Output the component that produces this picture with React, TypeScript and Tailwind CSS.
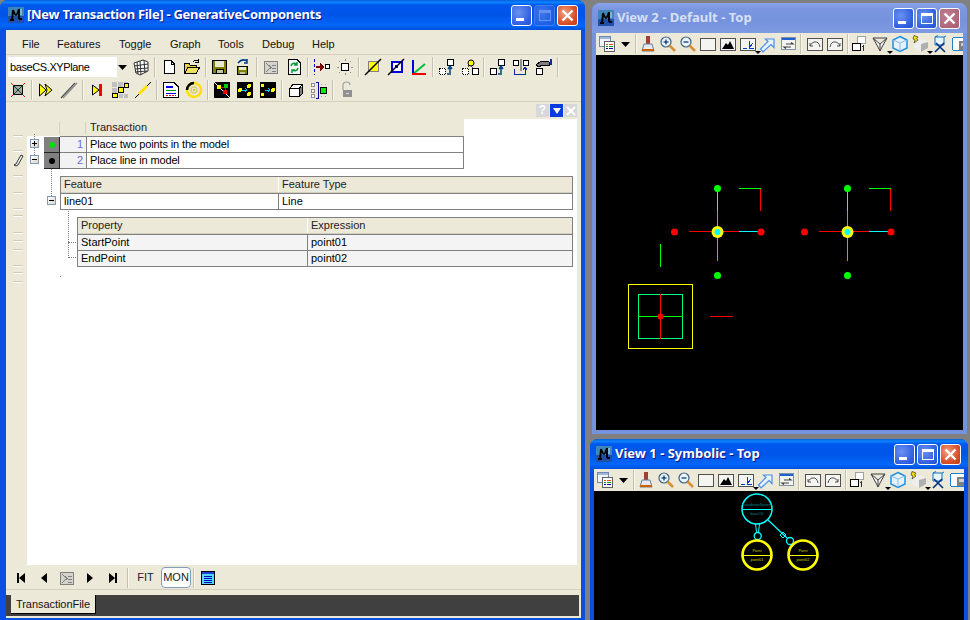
import React from 'react';

const Svg = ({ children, size = 18 }: { children: React.ReactNode; size?: number }) => (
  <svg width={size} height={size} viewBox="0 0 18 18" shapeRendering="crispEdges" className="block shrink-0">
    {children}
  </svg>
);

const Logo = () => (
  <svg width="16" height="16" viewBox="0 0 16 16" className="block shrink-0">
    <rect x="0" y="0" width="16" height="16" rx="1" fill="#3f86b8" />
    <rect x="0" y="9" width="16" height="7" fill="#1f4fa8" />
    <path d="M4 14 L5 3 M5 3 Q7 8 8 8 Q9 8 11 2 M11 2 L11 12 M11 12 L14 12 M2 13 L6 13" stroke="#000" strokeWidth="2" fill="none" />
    <path d="M13 2 L13 8" stroke="#bfe6ff" strokeWidth="1" />
  </svg>
);

// main window, toolbar row one
const GridIcon = () => <Svg><path d="M2 5 L11 2 L16 4 L16 13 L8 17 L4 15 Z M5 4 L6 16 M8 3 L9 17 M12 2 L13 15 M2 8 L16 6 M3 11 L16 10 M3 14 L15 13" fill="#fff" stroke="#333" strokeWidth="1" shapeRendering="auto" /></Svg>;
const NewDoc = () => <Svg><path d="M4.5 2.5 H11 L14.5 6 V15.5 H4.5 Z" fill="#fff" stroke="#000" /><path d="M11 2.5 V6 H14.5" fill="none" stroke="#000" /></Svg>;
const OpenFolder = () => <Svg><path d="M1.5 5.5 H6 L7 7 H13 V9 H5 L1.5 15.5 Z" fill="#e8d048" stroke="#000" /><path d="M1.5 15.5 L5 9 H17 L13 15.5 Z" fill="#f0e060" stroke="#000" /><path d="M10 4 Q12 1 15 3 M15 1 V4 H12" fill="none" stroke="#000" /></Svg>;
const Floppy = () => <Svg><rect x="1.5" y="2.5" width="14" height="13" fill="#808000" stroke="#000" /><rect x="4" y="3" width="9" height="6" fill="#e8e8d0" /><rect x="5" y="11" width="7" height="4" fill="#c8c8a0" stroke="#000" strokeWidth="1" /></Svg>;
const FloppyArrow = () => <Svg><rect x="3.5" y="8.5" width="10" height="8" fill="#808000" stroke="#000" /><rect x="5" y="9" width="7" height="3" fill="#e8e8d0" /><rect x="6" y="14" width="5" height="2" fill="#c8c8a0" /><path d="M4 5 Q8 0 13 3 M13 1 V5 H10" fill="none" stroke="#003c8c" strokeWidth="1.5" shapeRendering="auto" /></Svg>;
const ScriptGray = () => <Svg><rect x="2.5" y="3.5" width="13" height="12" fill="#d4d4cc" stroke="#808080" /><path d="M4 5 L9 9.5 L4 14 M10 7 H14 M10 10 H14 M10 13 H14" fill="none" stroke="#808080" /></Svg>;
const Refresh = () => <Svg><path d="M3.5 1.5 H12 L15.5 5 V16.5 H3.5 Z" fill="#f4f4f4" stroke="#000" /><path d="M6 8 Q7 4 12 6 M12 4 V7 H9" fill="none" stroke="#0a9a3c" strokeWidth="1.5" shapeRendering="auto" /><path d="M13 10 Q12 14 7 12 M7 15 V12 H10" fill="none" stroke="#0a9a3c" strokeWidth="1.5" shapeRendering="auto" /></Svg>;
const ArrowToBox = () => <Svg><path d="M1.5 1 V17" stroke="#0000c0" strokeDasharray="3 2" /><path d="M3 8 H7 V5 L11 9 L7 13 V10 H3 Z" fill="#800000" /><rect x="12.5" y="6.5" width="4" height="4" fill="#fff" stroke="#000" /></Svg>;
const SunBox = () => <Svg><rect x="5.5" y="5.5" width="7" height="7" fill="#fff" stroke="#000" /><path d="M9 1 V3 M9 15 V17 M1 9 H3 M15 9 H17 M3 3 L4 4 M14 4 L15 3 M3 15 L4 14 M14 14 L15 15" stroke="#909090" /></Svg>;
const LineSquare = ({ fill, stroke, inner }: { fill: string; stroke: string; inner?: boolean }) => (
  <Svg>
    <rect x="4.5" y="3.5" width="10" height="10" fill={fill} stroke={stroke} strokeWidth={inner ? 2 : 1} />
    {inner && <rect x="8" y="7" width="3" height="3" fill="#0000e0" />}
    <path d="M1 17 L17 1" stroke="#000" strokeWidth="1.5" shapeRendering="auto" />
  </Svg>
);
const Axes = () => <Svg><path d="M3 16 L15 6" stroke="#00c040" strokeWidth="2" shapeRendering="auto" /><path d="M3 2 V16" stroke="#0000e0" strokeWidth="2" /><path d="M2 16 H16" stroke="#f00000" strokeWidth="2" /></Svg>;
const BoxesArrow = ({ top = 'box' }: { top?: string }) => (
  <Svg>
    {top === 'box' ? <rect x="9.5" y="1.5" width="6" height="6" fill="#fff" stroke="#000" /> : <circle cx="10" cy="5" r="3" fill="#ffff00" stroke="#000" shapeRendering="auto" />}
    <rect x="1.5" y="10.5" width="5.5" height="6" fill="#fff" stroke="#000" strokeDasharray="1 1" />
    {top === 'box'
      ? <path d="M12 15 V10 M10 11 L12 8 L14 11 M9 16 H13" stroke="#004080" strokeWidth="1.5" fill="none" shapeRendering="auto" />
      : <><rect x="11.5" y="10.5" width="5.5" height="6" fill="#fff" stroke="#000" /><path d="M9 7 L12 10 M8 7 L7 9" stroke="#444" /></>}
  </Svg>
);
const BoxesArrowSolid = () => <Svg><rect x="9.5" y="1.5" width="6" height="6" fill="#fff" stroke="#000" /><rect x="1.5" y="10.5" width="6" height="6" fill="#fff" stroke="#000" /><path d="M12 15 V10 M10 11 L12 8 L14 11 M9 16 H13" stroke="#004080" strokeWidth="1.5" fill="none" shapeRendering="auto" /></Svg>;
const BoxesMerge = () => <Svg><rect x="1.5" y="2.5" width="5" height="5" fill="#fff" stroke="#000" /><rect x="11.5" y="2.5" width="5" height="5" fill="#fff" stroke="#000" /><path d="M9 1 V13" stroke="#909090" strokeWidth="2" /><path d="M2.5 11 V16.5 H13 V11 M11 12 L13 9 L15 12" stroke="#003090" fill="none" /></Svg>;
const HandBox = () => <Svg><rect x="1.5" y="10.5" width="6" height="6" fill="#fff" stroke="#000" /><path d="M1 7 L6 3 H12 L14 4 V7 H7 L4 9 Z" fill="#808080" stroke="#000" /><path d="M15.5 1 V7" stroke="#003090" strokeWidth="2" /></Svg>;

// main window, toolbar row two
const RedXBox = () => <Svg><rect x="4.5" y="4.5" width="9" height="9" fill="#a8a898" stroke="#000" /><path d="M4 4 L14 14 M14 4 L4 14" stroke="#004040" shapeRendering="auto" /><path d="M2 2 L4 4 M16 2 L14 4 M2 16 L4 14 M16 16 L14 14" stroke="#f00000" /></Svg>;
const Chevrons = () => <Svg><path d="M2.5 3 L9 9 L2.5 15 Z" fill="#ffff00" stroke="#000" shapeRendering="auto" /><path d="M8 3 L15 9 L8 15 L10 9 Z" fill="#ffff00" stroke="#000" shapeRendering="auto" /></Svg>;
const DoubleLine = () => <Svg><path d="M1 17 L15 2" stroke="#505050" strokeWidth="1.2" shapeRendering="auto" /><path d="M3 17 L17 2" stroke="#909090" strokeWidth="1.5" shapeRendering="auto" /></Svg>;
const PlayRed = () => <Svg><path d="M4.5 4 L11 9 L4.5 14 Z" fill="#ffff00" stroke="#000" shapeRendering="auto" /><rect x="11" y="3" width="3" height="12" fill="#f00000" /></Svg>;
const Checker = () => (
  <Svg>
    <rect x="1" y="1" width="5" height="5" fill="#c0c0c0" /><rect x="7" y="1" width="5" height="5" fill="#c0c0c0" /><rect x="13" y="1" width="4" height="5" fill="#c0c0c0" />
    <rect x="1" y="7" width="5" height="5" fill="#c0c0c0" /><rect x="7.5" y="6.5" width="5" height="5" fill="#ffff00" stroke="#000" /><rect x="13.5" y="2.5" width="3.5" height="4" fill="#ffff00" stroke="#000" />
    <rect x="1.5" y="12.5" width="5" height="4" fill="#ffff00" stroke="#000" /><rect x="8" y="13" width="4" height="4" fill="#c0c0c0" /><rect x="13" y="13" width="4" height="4" fill="#c0c0c0" />
  </Svg>
);
const YellowLine = () => <Svg><path d="M1 17 L17 1" stroke="#000" strokeWidth="1" shapeRendering="auto" /><path d="M5 13 L13 5" stroke="#ffe000" strokeWidth="3" shapeRendering="auto" /></Svg>;
const DocBars = () => <Svg><path d="M1.5 1.5 H12 L16.5 6 V16.5 H1.5 Z" fill="#fff" stroke="#000" /><path d="M4 6 H11" stroke="#0000e0" strokeWidth="2" /><path d="M4 9 H14" stroke="#00a000" strokeWidth="1" /><path d="M4 12 H14" stroke="#0000e0" strokeWidth="1" /><path d="M4 14.5 H14" stroke="#f00000" strokeDasharray="2 1" /></Svg>;
const RingIcon = () => <svg width="18" height="18" viewBox="0 0 18 18" className="block shrink-0"><circle cx="9" cy="9" r="7" fill="none" stroke="#ffe000" strokeWidth="2.5" /><path d="M9 2 A7 7 0 0 0 2 9" stroke="#000" strokeWidth="2.5" fill="none" /><circle cx="9" cy="9" r="3" fill="none" stroke="#d8d070" strokeWidth="1.5" /><circle cx="9" cy="9" r="1" fill="#d8b000" /></svg>;
const BlackLinks = () => <Svg><rect x="1" y="1" width="16" height="16" fill="#000" /><path d="M1 1 L17 17" stroke="#fff" shapeRendering="auto" /><rect x="4" y="4" width="4" height="4" fill="#ffff00" /><rect x="11" y="3" width="4" height="4" fill="#00d000" /><rect x="10" y="9" width="4" height="4" fill="#f00000" /><path d="M8 6 H11 M12 7 V9" stroke="#f00000" /></Svg>;
const BlackDots = ({ variant }: { variant: number }) => (
  <Svg>
    <rect x="1" y="1" width="16" height="16" fill="#000" />
    {variant === 1
      ? <><circle cx="4" cy="9" r="2" fill="#ffff00" /><circle cx="13" cy="5" r="2" fill="#ffff00" /><circle cx="13" cy="13" r="2" fill="#ffff00" /></>
      : <><rect x="2" y="3" width="3" height="3" fill="#ffff00" /><rect x="2" y="12" width="3" height="3" fill="#ffff00" /><circle cx="14" cy="9" r="2" fill="#ffff00" /></>}
    <path d="M6 9 H11 M9 7 L11 9 L9 11" stroke="#00d0ff" fill="none" />
  </Svg>
);
const Cube = () => <Svg><path d="M2.5 7.5 L6 3.5 H15.5 V12 L12 15.5 H2.5 Z" fill="#fff" stroke="#000" /><path d="M2.5 7.5 H12 V15.5 M12 7.5 L15.5 3.5" fill="none" stroke="#000" /><path d="M12.5 8 L15 5 V12 L12.5 15 Z" fill="#808080" /></Svg>;
const BoxesGreen = () => <Svg><rect x="1.5" y="2.5" width="3" height="3" fill="#fff" stroke="#909090" /><rect x="1.5" y="8.5" width="3" height="3" fill="#fff" stroke="#909090" /><rect x="1.5" y="13.5" width="3" height="3" fill="#fff" stroke="#909090" /><path d="M6 1 H8 V17 H6" stroke="#0000a0" fill="none" /><rect x="10.5" y="6.5" width="6" height="6" fill="#00f000" stroke="#000" /><path d="M11 3 H12 M15 3 H16 M11 15 H12 M15 15 H16" stroke="#a0a0a0" /></Svg>;
const Lock = () => <Svg><rect x="5" y="9" width="9" height="7" fill="#909090" /><rect x="8" y="12" width="3" height="1" fill="#e0e0e0" /><path d="M5 9 V4 Q5 1 9 1 Q12 1 12 4" fill="none" stroke="#a0a0a0" strokeWidth="1.2" shapeRendering="auto" /></Svg>;

// view window toolbar
const ViewWin = () => <Svg><rect x="1.5" y="1.5" width="11" height="10" fill="#f0f4ff" stroke="#7088b0" /><rect x="2" y="2" width="10" height="2" fill="#a0b8e0" /><rect x="6.5" y="6.5" width="10" height="10" fill="#fff" stroke="#606060" /><path d="M8 9 H10 M11 9 H15" stroke="#e05000" /><path d="M8 11 H10 M11 11 H15" stroke="#00a000" /><path d="M8 13 H10 M11 13 H15" stroke="#0000c0" /></Svg>;
const Caret = () => <svg width="9" height="5" viewBox="0 0 9 5" className="block"><path d="M0 0 H9 L4.5 5 Z" fill="#000" /></svg>;
const Brush = () => <Svg><rect x="7" y="1" width="4" height="8" fill="#a04030" /><path d="M5 9 H13 L15 16 H3 Z" fill="#e8e8f0" stroke="#6080a0" shapeRendering="auto" /><path d="M3 15 H15" stroke="#d06000" strokeWidth="2" /></Svg>;
const Zoom = ({ plus }: { plus?: boolean }) => (
  <svg width="18" height="18" viewBox="0 0 18 18" className="block shrink-0">
    <circle cx="7" cy="7" r="5" fill="#e8f4ff" stroke="#406080" strokeWidth="1.2" />
    <path d="M4.5 7 H9.5" stroke="#003060" strokeWidth="1.2" />
    {plus && <path d="M7 4.5 V9.5" stroke="#003060" strokeWidth="1.2" />}
    <path d="M10.5 10.5 L16 16" stroke="#d89030" strokeWidth="2.5" />
  </svg>
);
const Framed = ({ children }: { children?: React.ReactNode }) => <Svg><rect x="1.5" y="3.5" width="15" height="12" fill="#f4f4f0" stroke="#505050" />{children}</Svg>;
const Mountain = () => <Framed><path d="M3 14 L7 8 L9 10 L11 6 L15 14 Z" fill="#000" shapeRendering="auto" /></Framed>;
const Chart = () => <Framed><path d="M4 13 H8 M10 6 V13 H15 M10 13 L14 8" stroke="#0040c0" fill="none" /></Framed>;
const UpArrow = () => <svg width="18" height="18" viewBox="0 0 18 18" className="block shrink-0"><path d="M1.5 14 L9 6.5 L6.5 4 H15 V12.5 L12 9.5 L4 17 Z" stroke="#4a90e8" strokeWidth="1.2" fill="#e8f2ff" /></svg>;
const WinSwap = () => <Svg><rect x="2.5" y="2.5" width="14" height="12" fill="#f4f4f0" stroke="#8090a8" /><rect x="3" y="3" width="13" height="2" fill="#2060d0" /><path d="M7 9 H14 L12 7.5 M12 12 H5 L7 13.5" stroke="#404040" strokeWidth="1.2" fill="none" shapeRendering="auto" /></Svg>;
const Undo = ({ flip }: { flip?: boolean }) => <Framed><path d={flip ? 'M4 12 Q5 6 10 7 Q13 8 14 11 M14 8 V11 H11' : 'M14 12 Q13 6 8 7 Q5 8 4 11 M4 8 V11 H7'} fill="none" stroke="#505050" shapeRendering="auto" /></Framed>;
const ViewBoxes = () => <Svg><rect x="6.5" y="1.5" width="8" height="7" fill="#fff" stroke="#a0a0a0" /><rect x="1.5" y="8.5" width="8" height="7" fill="#fff" stroke="#000" /><path d="M11 11 L13 11 M12 10 V16" stroke="#303030" /></Svg>;
const Funnel = () => <svg width="18" height="18" viewBox="0 0 18 18" className="block shrink-0"><path d="M2 3 H16 L11 12 L9 16 L7 12 Z M2 3 L9 9 L16 3 M9 9 V16" fill="#f4f4f4" stroke="#404040" /></svg>;
const BlueCube = () => <svg width="18" height="18" viewBox="0 0 18 18" className="block shrink-0"><path d="M9 1.5 L16 5 V13 L9 16.5 L2 13 V5 Z" fill="#e8f0fa" stroke="#2090e0" strokeWidth="1.5" /><path d="M2 5 L9 8 L16 5 M9 8 V16" fill="none" stroke="#80c0f0" /></svg>;
const SoftCube = () => <svg width="18" height="18" viewBox="0 0 18 18" className="block shrink-0"><path d="M3 7 L10 4 L17 7 V13 L10 17 L3 13 Z" fill="#eeeeee" /><path d="M10 9 L17 7 V13 L10 17 Z" fill="#b0b0b0" /><path d="M3 0.5 L7 2 L5.5 4 L7 5 L3 8 L4 5 L2 4 Z" fill="#f0e000" stroke="#202020" strokeWidth="0.6" /></svg>;
const CubeX = () => <svg width="18" height="18" viewBox="0 0 18 18" className="block shrink-0"><path d="M4 2 H13 V10 H4 Z M4 2 L7 0.5 M13 2 L15 1" fill="#e8f4ff" stroke="#1070c0" /><path d="M4 17 L13 8 M5 8 L14 17" stroke="#003080" strokeWidth="1.6" /></svg>;
const CubeGray = () => <Svg><rect x="1.5" y="2.5" width="14" height="13" rx="2" fill="#fff" stroke="#2080d0" /><rect x="8" y="6" width="9" height="9" fill="#808080" /><rect x="10" y="8" width="5" height="3" fill="#d0d0d0" /></Svg>;

const Sep = ({ h = 'h-[20px]' }: { h?: string }) => (
  <div className={`w-[5px] flex justify-center shrink-0 ${h}`}>
    <div className="w-[2px] h-full border-l border-[#c4c1ae] bg-white/60" />
  </div>
);

const Slot = ({ children }: { children: React.ReactNode }) => (
  <div className="w-[23px] h-[22px] flex items-center justify-center shrink-0">{children}</div>
);

const VSlot = ({ children, caret }: { children: React.ReactNode; caret?: boolean }) => (
  <div className="relative w-[20px] h-[22px] flex items-center justify-center shrink-0">
    {children}
    {caret && <div className="absolute right-[-3px] bottom-[1px] border-x-[3px] border-t-[3px] border-x-transparent border-t-black" />}
  </div>
);

const WinButton = ({ kind, disabled, active }: { kind: 'min' | 'max' | 'close'; disabled?: boolean; active: boolean }) => {
  const color =
    kind === 'close'
      ? active ? 'bg-[radial-gradient(circle_at_35%_35%,#f0a080,#d8522c_60%,#c03810)]' : 'bg-[radial-gradient(circle_at_35%_35%,#c08090,#a85a70)]'
      : 'bg-[radial-gradient(circle_at_35%_35%,#6a92f0,#2f5fe0_70%,#2450d0)]';
  return (
    <div className={`w-[21px] h-[21px] rounded-[3px] border flex items-center justify-center ${color} ${disabled ? 'border-[#6f93ee] opacity-60' : 'border-white'}`}>
      {kind === 'min' && <div className="w-[8px] h-[3px] bg-white mt-[8px] mr-[3px]" />}
      {kind === 'max' && <div className={`w-[12px] h-[11px] border border-t-[3px] ${disabled ? 'border-[#a8bcf0]' : 'border-white'}`} />}
      {kind === 'close' && (
        <svg width="13" height="13" viewBox="0 0 13 13"><path d="M1.5 1.5 L11.5 11.5 M11.5 1.5 L1.5 11.5" stroke="#fff" strokeWidth="2.4" /></svg>
      )}
    </div>
  );
};

const ACTIVE_BAR = 'bg-[linear-gradient(180deg,#0a5fe0_0%,#0a84ff_8%,#0058ee_16%,#0054e8_50%,#0466fa_85%,#0050d8_100%)]';
const INACTIVE_BAR = 'bg-[linear-gradient(180deg,#8aa4e8_0%,#7a96e0_20%,#7592dd_60%,#7f9be2_100%)]';

const TitleBar = ({ title, active, maxDisabled, className, textClass = '' }: { title: string; active: boolean; maxDisabled?: boolean; className: string; textClass?: string }) => (
  <div className={`flex items-center justify-between rounded-t-[8px] shrink-0 ${active ? ACTIVE_BAR : INACTIVE_BAR} ${className}`}>
    <div className="flex items-center gap-[3px]">
      <Logo />
      <span className={`text-[13px] font-bold font-['Noto_Sans',sans-serif] whitespace-nowrap ${textClass} ${active ? 'text-white [text-shadow:1px_1px_#0f1089]' : 'text-[#d8e0f6]'}`}>{title}</span>
    </div>
    <div className="flex items-center gap-[2px]">
      <WinButton kind="min" active={active} />
      <WinButton kind="max" active={active} disabled={maxDisabled} />
      <WinButton kind="close" active={active} />
    </div>
  </div>
);

const ViewToolbar = () => (
  <div className="flex items-center h-[22px] bg-[#ece9d8] pl-[1px] shrink-0 overflow-hidden">
    <VSlot><ViewWin /></VSlot>
    <div className="w-[16px] flex justify-center shrink-0"><Caret /></div>
    <Sep />
    <VSlot><Brush /></VSlot>
    <VSlot><Zoom plus /></VSlot>
    <VSlot><Zoom /></VSlot>
    <VSlot><Framed /></VSlot>
    <VSlot><Mountain /></VSlot>
    <VSlot caret><Chart /></VSlot>
    <VSlot><UpArrow /></VSlot>
    <VSlot><WinSwap /></VSlot>
    <Sep />
    <div className="w-[2px] shrink-0" />
    <VSlot><Undo /></VSlot>
    <VSlot><Undo flip /></VSlot>
    <Sep />
    <VSlot><ViewBoxes /></VSlot>
    <VSlot caret><Funnel /></VSlot>
    <VSlot><BlueCube /></VSlot>
    <VSlot caret><SoftCube /></VSlot>
    <VSlot><CubeX /></VSlot>
    <VSlot><CubeGray /></VSlot>
  </div>
);

const CrossFigure = ({ dx }: { dx: number }) => (
  <g transform={`translate(${dx} 0)`}>
    <g shapeRendering="crispEdges">
      <path d="M717.5 190 V211" stroke="#00ffff" />
      <path d="M717.5 211 V261" stroke="#00ff00" />
      <path d="M689 231.5 H739" stroke="#ff0000" />
      <path d="M739 231.5 H761" stroke="#00ffff" />
      <path d="M739 188.5 H761" stroke="#00ff00" />
      <path d="M760.5 189 V211" stroke="#ff0000" />
    </g>
    <circle cx="717.5" cy="188.5" r="3.5" fill="#00ff00" />
    <circle cx="717.5" cy="275.5" r="3.5" fill="#00ff00" />
    <circle cx="674.5" cy="232" r="3.5" fill="#ff0000" />
    <circle cx="761" cy="232" r="3.5" fill="#ff0000" />
    <circle cx="717.5" cy="232" r="6" fill="#ffff00" />
    <circle cx="717.5" cy="232" r="3" fill="#00ffff" />
  </g>
);

// drawing in screen coordinates, shifted by the canvas origin
const ModelDrawing = () => (
  <svg width="367" height="375" viewBox="596 55 367 375" className="block">
    <CrossFigure dx={0} />
    <CrossFigure dx={130} />
    <g shapeRendering="crispEdges">
      <path d="M660.5 244 V267" stroke="#00ff00" />
      <rect x="628.5" y="284.5" width="64" height="64" fill="none" stroke="#ffff00" />
      <rect x="638.5" y="294.5" width="44" height="44" fill="none" stroke="#00ff80" />
      <path d="M638 316.5 H683" stroke="#00ff00" />
      <path d="M660.5 294 V339" stroke="#ff0000" />
      <path d="M710 316.5 H733" stroke="#ff0000" />
    </g>
    <circle cx="660.5" cy="316.5" r="3" fill="#ff0000" />
  </svg>
);

const PointNode = ({ cx, name }: { cx: number; name: string }) => (
  <g>
    <circle cx={cx} cy="555" r="14.5" fill="#000" stroke="#ffff00" strokeWidth="2.6" />
    <path d={`M${cx - 14} 555.5 H${cx + 14}`} stroke="#ffff00" shapeRendering="crispEdges" />
    <text x={cx} y="552" textAnchor="middle" fontSize="4" fill="#c8c800" fontFamily="Liberation Sans, sans-serif">Point</text>
    <text x={cx} y="561" textAnchor="middle" fontSize="4" fill="#c8c800" fontFamily="Liberation Sans, sans-serif">{name}</text>
  </g>
);

const SymbolicDrawing = () => (
  <svg width="370" height="129" viewBox="594 491 370 129" className="block">
    <path d="M755.5 524 L756.5 532 M759.5 524 L758.5 532" stroke="#00ffff" />
    <circle cx="757.7" cy="536" r="3.5" fill="none" stroke="#00ffff" strokeWidth="1.3" />
    <path d="M768 520 L787 538" stroke="#00ffff" strokeWidth="1.3" />
    <path d="M783 532 L786 535 L783 538 L780 535 Z" fill="none" stroke="#00ffff" />
    <circle cx="790" cy="541" r="3.5" fill="none" stroke="#00ffff" strokeWidth="1.3" />
    <circle cx="757" cy="509" r="15" fill="#000" stroke="#00ffff" strokeWidth="1.5" />
    <path d="M742 509.5 H772" stroke="#00ffff" shapeRendering="crispEdges" />
    <text x="757" y="506" textAnchor="middle" fontSize="3.6" fill="#008c8c" fontFamily="Liberation Sans, sans-serif">CoordinateSystem</text>
    <text x="757" y="515" textAnchor="middle" fontSize="3.6" fill="#008c8c" fontFamily="Liberation Sans, sans-serif">baseCS</text>
    <PointNode cx={757} name="point01" />
    <PointNode cx={803} name="point02" />
  </svg>
);

const TreeBox = ({ plus, className = '' }: { plus?: boolean; className?: string }) => (
  <div className={`absolute w-[9px] h-[9px] border border-[#7f9db9] bg-[linear-gradient(135deg,#fff,#d8d4c4)] flex items-center justify-center ${className}`}>
    <div className="relative w-[5px] h-px bg-black">
      {plus && <div className="absolute left-[2px] top-[-2px] w-px h-[5px] bg-black" />}
    </div>
  </div>
);

const HeaderCell = ({ children, className = '' }: { children?: React.ReactNode; className?: string }) => (
  <div className={`h-full flex items-center pl-[3px] text-[#222] ${className}`}>{children}</div>
);

const DataGrid = ({ head, rows, col, tint }: { head: [string, string]; rows: [string, string][]; col: string; tint?: boolean }) => (
  <div className="border border-[#808080] flex flex-col">
    <div className="flex h-[16px] bg-[#ece9d8] border-b border-[#d4d0c0]">
      <HeaderCell className={`${col} shrink-0 border-r border-white`}>{head[0]}</HeaderCell>
      <HeaderCell className="flex-1">{head[1]}</HeaderCell>
    </div>
    {rows.map((r) => (
      <div key={r[0]} className={`flex h-[16px] border-t border-[#808080] ${tint ? 'bg-[#f4f4f4]' : 'bg-white'}`}>
        <div className={`${col} shrink-0 border-r border-[#808080] pl-[3px] leading-[15px] text-black`}>{r[0]}</div>
        <div className="flex-1 pl-[3px] leading-[15px] text-black">{r[1]}</div>
      </div>
    ))}
  </div>
);

const TxRow = ({ n, text, dot }: { n: number; text: string; dot: string }) => (
  <div className="flex h-[16px] border-t border-[#808080] bg-white">
    <div className="w-[16px] -ml-[16px] h-[16px] bg-[#808080] border-r border-b border-[#222] shrink-0 flex items-center justify-center">
      <div className={`w-[6px] h-[6px] rounded-full ${dot}`} />
    </div>
    <div className="w-[27px] shrink-0 bg-[#f2f2f2] border-r border-[#808080] text-right pr-[3px] text-[#6a6ae0] leading-[15px]">{n}</div>
    <div className="flex-1 pl-[3px] text-black leading-[15px] tracking-[-0.14px]">{text}</div>
  </div>
);

const RULER_TICKS = [135, 150, 175, 192, 208, 215, 232, 240, 249, 265, 272, 281];

export default function App() {
  return (
    <div className="relative w-[970px] h-[620px] overflow-hidden bg-[#808080] text-[11px] font-['Liberation_Sans',sans-serif]">
      {/* main window */}
      <div className="absolute left-0 top-0 w-[585px] h-[622px] flex flex-col bg-[#0a50e0] rounded-t-[8px]">
        <TitleBar title="[New Transaction File] - GenerativeComponents" active maxDisabled className="h-[30px] pl-[8px] pr-[7px]" textClass="tracking-[-0.3px]" />
        <div className="ml-[6px] flex-1 mb-[4px] mr-[4px] bg-[#ece9d8] flex flex-col min-h-0">
          <div className="flex items-center h-[25px] pt-[4px] shrink-0 border-b border-[#d4d0c0] text-[#111]">
            <div className="w-[16px]" />
            <span className="w-[35px]">File</span>
            <span className="w-[62px]">Features</span>
            <span className="w-[51px]">Toggle</span>
            <span className="w-[48px]">Graph</span>
            <span className="w-[44px]">Tools</span>
            <span className="w-[50px]">Debug</span>
            <span>Help</span>
          </div>
          <div className="flex items-center h-[24px] shrink-0 pl-[2px]">
            <div className="w-[120px] h-[20px] bg-white flex items-center justify-between shrink-0">
              <span className="pl-[2px] text-black tracking-[-0.4px]">baseCS.XYPlane</span>
              <div className="w-[11px] h-full bg-[#ece9d8] flex items-center justify-center"><Caret /></div>
            </div>
            <div className="w-[1px] shrink-0" />
            <Slot><GridIcon /></Slot>
            <Sep />
            <Slot><NewDoc /></Slot>
            <Slot><OpenFolder /></Slot>
            <Sep />
            <Slot><Floppy /></Slot>
            <Slot><FloppyArrow /></Slot>
            <Sep />
            <Slot><ScriptGray /></Slot>
            <Slot><Refresh /></Slot>
            <Sep />
            <Slot><ArrowToBox /></Slot>
            <Slot><SunBox /></Slot>
            <Sep />
            <Slot><LineSquare fill="#ffff00" stroke="#808080" /></Slot>
            <Slot><LineSquare fill="#fff" stroke="#0000e0" inner /></Slot>
            <Slot><Axes /></Slot>
            <Sep />
            <Slot><BoxesArrow /></Slot>
            <Slot><BoxesArrow top="circle" /></Slot>
            <Sep />
            <Slot><BoxesArrowSolid /></Slot>
            <Slot><BoxesMerge /></Slot>
            <Slot><HandBox /></Slot>
            <Sep />
          </div>
          <div className="flex items-center h-[23px] shrink-0 border-b border-[#d4d0c0]">
            <Slot><RedXBox /></Slot>
            <Sep />
            <Slot><Chevrons /></Slot>
            <Slot><DoubleLine /></Slot>
            <Sep />
            <Slot><PlayRed /></Slot>
            <Slot><Checker /></Slot>
            <Slot><YellowLine /></Slot>
            <Sep />
            <Slot><DocBars /></Slot>
            <Slot><RingIcon /></Slot>
            <Sep />
            <Slot><BlackLinks /></Slot>
            <Slot><BlackDots variant={1} /></Slot>
            <Slot><BlackDots variant={2} /></Slot>
            <Sep />
            <Slot><Cube /></Slot>
            <Slot><BoxesGreen /></Slot>
            <Sep />
            <Slot><Lock /></Slot>
          </div>

          {/* docked pane caption */}
          <div className="flex justify-end items-center gap-[1px] h-[17px] shrink-0 pr-[4px]">
            <div className="w-[13px] h-[13px] bg-[#d8d8d8] text-white font-bold text-[12px] leading-[13px] text-center">?</div>
            <div className="w-[13px] h-[13px] bg-[#0a3ce0] flex items-center justify-center">
              <div className="border-x-[4px] border-t-[6px] border-x-transparent border-t-white" />
            </div>
            <div className="w-[13px] h-[13px] bg-[#d8d8d8] flex items-center justify-center">
              <svg width="10" height="10" viewBox="0 0 10 10"><path d="M1 1 L9 9 M9 1 L1 9" stroke="#fff" strokeWidth="2" /></svg>
            </div>
          </div>

          {/* transaction tree */}
          <div className="flex flex-1 min-h-0 pr-[4px]">
            <div className="relative w-[21px] shrink-0">
              <svg width="21" height="170" viewBox="0 119 21 170" className="block">
                {RULER_TICKS.map((y) => (
                  <g key={y} shapeRendering="crispEdges">
                    <path d={`M7 ${y}.5 H17`} stroke="#cfccb8" />
                    <path d={`M7 ${y + 1}.5 H17`} stroke="#fff" />
                  </g>
                ))}
                <path d="M8 165 L10 164 L15 155 L17 156 L12 165 L10 166 Z" fill="#fff" stroke="#000" strokeWidth="0.8" />
              </svg>
            </div>
            <div className="relative flex-1 bg-white flex flex-col">
              <div className="w-[437px] bg-[#ece9d8]">
                <div className="flex h-[17px] items-center">
                  <div className="w-[33px] shrink-0 h-[12px] border-r border-[#d4d0c0]" />
                  <div className="w-[26px] shrink-0 h-[12px] border-r border-[#d4d0c0]" />
                  <span className="pl-[4px] text-[#222]">Transaction</span>
                </div>
              </div>
              <div className="ml-[33px] w-[404px] border-r border-b border-[#808080]">
                <TxRow n={1} text="Place two points in the model" dot="bg-[#00e000]" />
                <TxRow n={2} text="Place line in model" dot="bg-black" />
              </div>
              <div className="ml-[33px] mr-[4px] mt-[7px]">
                <DataGrid head={['Feature', 'Feature Type']} rows={[['line01', 'Line']]} col="w-[218px]" />
              </div>
              <div className="ml-[50px] mr-[4px] mt-[7px]">
                <DataGrid head={['Property', 'Expression']} rows={[['StartPoint', 'point01'], ['EndPoint', 'point02']]} col="w-[230px]" tint />
              </div>

              {/* tree connectors over the grids */}
              <TreeBox plus className="left-[3px] top-[20px]" />
              <TreeBox className="left-[3px] top-[36px]" />
              <TreeBox className="left-[20px] top-[77px]" />
              <div className="absolute left-[7px] top-[15px] h-[5px] border-l border-dotted border-[#808080]" />
              <div className="absolute left-[7px] top-[29px] h-[7px] border-l border-dotted border-[#808080]" />
              <div className="absolute left-[24px] top-[50px] h-[27px] border-l border-dotted border-[#808080]" />
              <div className="absolute left-[41px] top-[92px] h-[47px] w-[10px] border-l border-b border-dotted border-[#808080]" />
              <div className="absolute left-[41px] top-[123px] w-[10px] border-t border-dotted border-[#808080]" />
              <div className="absolute left-[33px] top-[157px] w-px h-px bg-[#808080]" />
            </div>
          </div>

          {/* navigation bar */}
          <div className="flex items-center h-[25px] pt-[1px] shrink-0 border-b border-[#d4d0c0] text-[#222]">
            <div className="w-[3px]" />
            <Slot><svg width="10" height="10" viewBox="0 0 10 10"><path d="M1 0 H3 V10 H1 Z M9 0 V10 L3 5 Z" fill="#000" /></svg></Slot>
            <Slot><svg width="6" height="10" viewBox="0 0 6 10"><path d="M6 0 V10 L0 5 Z" fill="#000" /></svg></Slot>
            <Slot><ScriptGray /></Slot>
            <Slot><svg width="6" height="10" viewBox="0 0 6 10"><path d="M0 0 V10 L6 5 Z" fill="#000" /></svg></Slot>
            <Slot><svg width="10" height="10" viewBox="0 0 10 10"><path d="M7 0 H9 V10 H7 Z M1 0 V10 L7 5 Z" fill="#000" /></svg></Slot>
            <div className="w-[1px] shrink-0" />
            <Sep />
            <div className="w-[31px] text-center">FIT</div>
            <div className="w-[30px] h-[21px] rounded-[4px] bg-white border border-[#7f9db9] flex items-center justify-center">MON</div>
            <Sep />
            <div className="w-[23px] flex justify-center">
              <svg width="14" height="14" viewBox="0 0 14 14" shapeRendering="crispEdges">
                <rect x="0.5" y="0.5" width="13" height="13" fill="#50d8ff" stroke="#000" />
                <rect x="1" y="1" width="12" height="2" fill="#2040d0" />
                <path d="M3 5.5 H11 M3 7.5 H11 M3 9.5 H11 M3 11.5 H11" stroke="#0000c0" />
              </svg>
            </div>
          </div>

          {/* document tabs */}
          <div className="h-[21px] mt-[5px] mb-[2px] mr-[2px] bg-[#404040] shrink-0 pl-[5px]">
            <div className="w-[85px] h-[19px] bg-[#ece9d8] border-r border-b border-black flex items-center justify-center text-[#111] tracking-[-0.05px]">TransactionFile</div>
          </div>
        </div>
      </div>

      {/* view 2 */}
      <div className="absolute left-[592px] top-[3px] w-[375px] h-[431px] bg-[#7592dd] rounded-t-[8px] flex flex-col">
        <TitleBar title="View 2 - Default - Top" active={false} className="h-[30px] pl-[6px] pr-[7px]" />
        <div className="mx-[4px] flex-1 mb-[4px] flex flex-col min-h-0">
          <ViewToolbar />
          <div className="flex-1 bg-black min-h-0 overflow-hidden"><ModelDrawing /></div>
        </div>
      </div>

      {/* view 1 */}
      <div className="absolute left-[590px] top-[439px] w-[378px] h-[185px] bg-[#0a50e0] rounded-t-[8px] flex flex-col">
        <TitleBar title="View 1 - Symbolic - Top" active className="h-[30px] pl-[6px] pr-[7px]" />
        <div className="mx-[4px] flex-1 flex flex-col min-h-0">
          <ViewToolbar />
          <div className="flex-1 bg-black min-h-0 overflow-hidden"><SymbolicDrawing /></div>
        </div>
      </div>
    </div>
  );
}
